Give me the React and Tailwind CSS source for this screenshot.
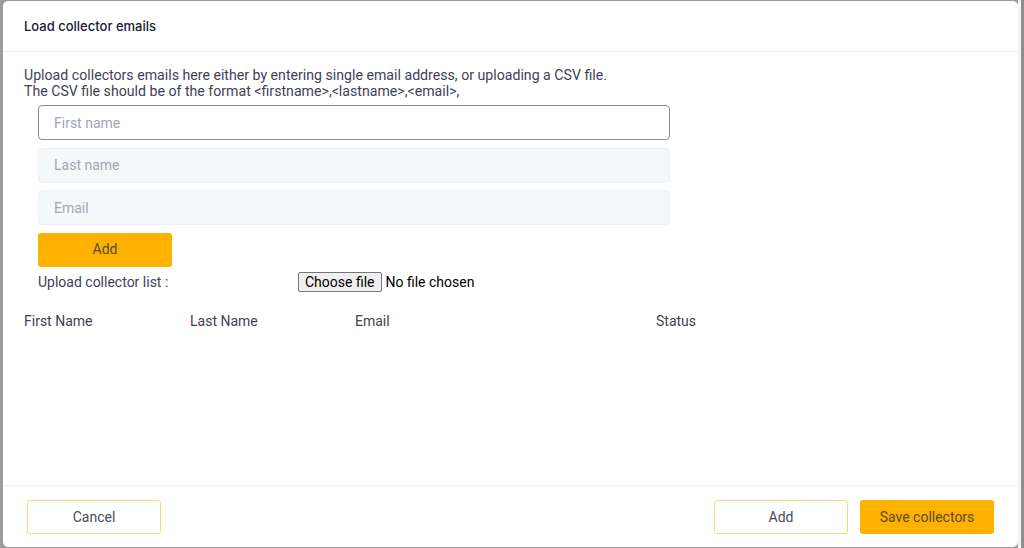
import React from 'react';

const inputBase = 'h-[35px] w-[632px] rounded-[4px] px-[15px] text-[14px] outline-none placeholder:text-[#a1a5b7]';

const App = () => {
    return (
        <div className="flex h-[548px] w-full overflow-hidden bg-[#9c9c9c]" style={{ fontFamily: 'Roboto, "Liberation Sans", sans-serif' }}>
            <div className="ml-[3px] mt-[1px] flex h-[546px] w-[1015px] flex-col rounded-[5px] bg-white">
                {/* Header */}
                <div className="flex h-[51px] shrink-0 items-center border-b border-[#eff2f5] px-[21px] pt-[2px]">
                    <h2 className="text-[13px] font-medium text-[#181c32]" style={{ fontFamily: 'Inter, Roboto, sans-serif' }}>
                        Load collector emails
                    </h2>
                </div>

                {/* Body */}
                <div className="flex-1 px-[21px] pt-[15px]">
                    <p className="text-[14.15px] leading-[16px] text-[#3f4254]">
                        Upload collectors emails here either by entering single email address, or uploading a CSV file.
                        <br />
                        The CSV file should be of the format &lt;firstname&gt;,&lt;lastname&gt;,&lt;email&gt;,
                    </p>

                    <div className="ml-[14px] mt-[6px] flex flex-col gap-[7.5px]">
                        <input className={`${inputBase} border border-[#8a8a8a] bg-white`} placeholder="First name" />
                        <input className={`${inputBase} border border-[#eef0f6] bg-[#f5f8fa]`} placeholder="Last name" />
                        <input className={`${inputBase} border border-[#eef0f6] bg-[#f5f8fa]`} placeholder="Email" />
                        <button className="h-[34px] w-[134px] rounded-[3px] bg-[#ffb100] text-[14px] text-[#5b4a26]">Add</button>
                    </div>

                    <div className="ml-[14px] mt-[5px] flex items-center text-[14px] text-[#3f4254]">
                        <span className="w-[260px]">Upload collector list :</span>
                        <label className="flex items-center text-black">
                            <span className="rounded-[2px] border border-[#767676] bg-[#efefef] px-[6px] py-[1px] text-[14px] leading-[16px]">Choose file</span>
                            <span className="ml-[4px]">No file chosen</span>
                        </label>
                    </div>

                    <div className="mt-[18px] flex text-[14px] text-[#3f4254]">
                        <span className="w-[166px]">First Name</span>
                        <span className="w-[165px]">Last Name</span>
                        <span className="w-[301px]">Email</span>
                        <span>Status</span>
                    </div>
                </div>

                {/* Footer */}
                <div className="flex h-[62px] shrink-0 items-start justify-between border-t border-[#eff2f5] px-[24px] pt-[14px]">
                    <button className="h-[34px] w-[134px] rounded-[3px] border border-[#ffd77a] bg-white text-[14px] text-[#4b4b5a]">Cancel</button>
                    <div className="flex gap-[12px]">
                        <button className="h-[34px] w-[134px] rounded-[3px] border border-[#ffd77a] bg-white text-[14px] text-[#4b4b5a]">Add</button>
                        <button className="h-[34px] w-[134px] rounded-[3px] bg-[#ffb100] text-[14px] text-[#5b4a26]">Save collectors</button>
                    </div>
                </div>
            </div>
            <div className="w-[3px] bg-[#f3f4fa]" />
            <div className="flex-1 bg-[#8e8e8e]" />
        </div>
    );
};

export default App;
